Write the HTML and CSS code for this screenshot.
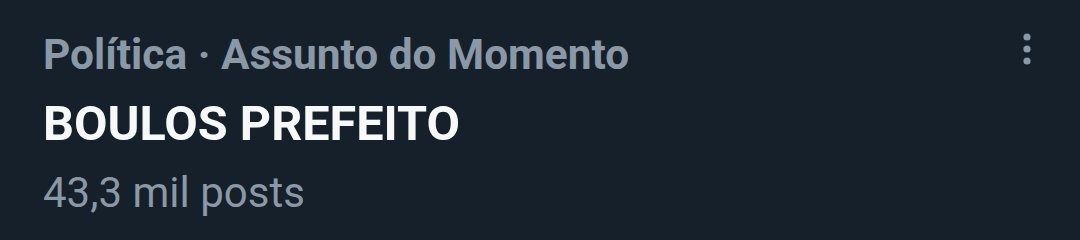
FILE: index.html
```html
<!DOCTYPE html>
<html lang="pt-BR">
<head>
    <meta charset="UTF-8">
    <meta name="viewport" content="width=device-width, initial-scale=1.0">
    <title>Assunto do Momento</title>
    <link rel="stylesheet" href="styles.css">
</head>
<body>
    <div class="trend">
        <div class="trend-body">
            <div class="trend-context">Política · Assunto do Momento</div>
            <div class="trend-name">BOULOS PREFEITO</div>
            <div class="trend-count">43,3 mil posts</div>
        </div>
        <div class="trend-more">
            <svg width="10" height="34" viewBox="0 0 10 34">
                <circle cx="5" cy="5" r="3.6" fill="#8b98a5"/>
                <circle cx="5" cy="17" r="3.6" fill="#8b98a5"/>
                <circle cx="5" cy="29" r="3.6" fill="#8b98a5"/>
            </svg>
        </div>
    </div>
</body>
</html>
```

FILE: styles.css
```css
html, body {
    margin: 0;
    padding: 0;
    background: #15202b;
}
body {
    font-family: Roboto, "Noto Sans", sans-serif;
    width: 1080px;
    height: 240px;
    overflow: hidden;
}
.trend {
    display: flex;
    justify-content: space-between;
    padding: 30px 48px 0 43px;
}
.trend-context {
    color: #8b98a5;
    font-size: 42.4px;
    font-weight: 700;
    line-height: 50px;
}
.trend-name {
    color: #f7f9f9;
    font-size: 48.6px;
    font-weight: 700;
    line-height: 64px;
    margin-top: 12px;
}
.trend-count {
    color: #8b98a5;
    font-size: 42px;
    font-weight: 400;
    line-height: 56px;
    margin-top: 9px;
}
.trend-more {
    padding-top: 2px;
}
```
